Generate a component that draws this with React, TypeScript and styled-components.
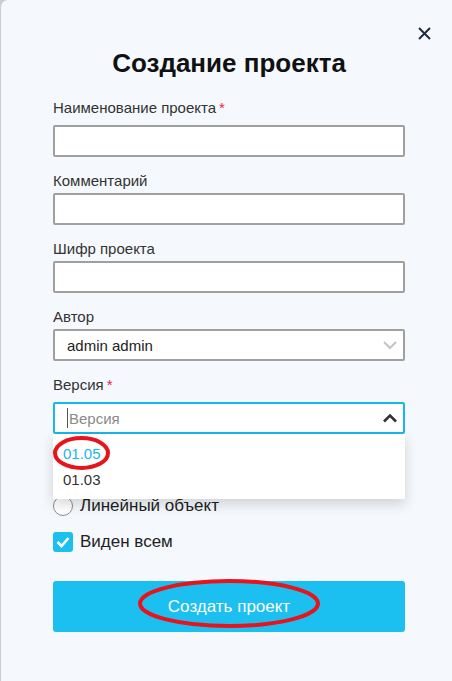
import React from 'react';
import styled, { createGlobalStyle } from 'styled-components';

const GlobalStyle = createGlobalStyle`
  html, body {
    margin: 0;
    padding: 0;
    background: #c8cdd3;
    font-family: "Liberation Sans", Arial, sans-serif;
  }
  * { box-sizing: border-box; }
`;

const Modal = styled.div`
  position: relative;
  margin-left: 1px;
  min-height: 681px;
  background: #f5f9fd;
  border-top-left-radius: 7px;
  padding: 48px 47px 40px 52px;
`;

const CloseButton = styled.button`
  position: absolute;
  top: 26px;
  right: 21px;
  width: 14px;
  height: 14px;
  padding: 0;
  border: none;
  background: transparent;
  display: flex;
  align-items: center;
  justify-content: center;
`;

const Title = styled.h1`
  margin: 0 0 21px;
  font-size: 26px;
  line-height: 30px;
  font-weight: 700;
  color: #111;
  text-align: center;
`;

const Form = styled.div`
  display: flex;
  flex-direction: column;
`;

const Field = styled.div<{ $mb?: number }>`
  display: flex;
  flex-direction: column;
  margin-bottom: ${(p) => (p.$mb ?? 15)}px;
  position: relative;
`;

const Label = styled.div<{ $required?: boolean }>`
  font-size: 15px;
  line-height: 18px;
  color: #333;
  margin-bottom: ${(p) => (p.$required ? 8 : 3)}px;
`;

const Star = styled.span`
  color: #e8204a;
  margin-left: 3px;
`;

const Input = styled.input`
  height: 32px;
  width: 100%;
  border: 2px solid #a0a0a0;
  border-radius: 2px;
  background: #fff;
  font: inherit;
  font-size: 15px;
  padding: 0 12px;
  outline: none;
`;

const SelectBox = styled.div<{ $focused?: boolean }>`
  height: 32px;
  border: 2px solid ${(p) => (p.$focused ? '#1ab7ea' : '#a0a0a0')};
  border-radius: 2px;
  background: #fff;
  display: flex;
  align-items: center;
  padding: 0 5px 0 12px;
  font-size: 15px;
  color: #222;
`;

const SelectValue = styled.span`
  flex: 1;
`;

const Placeholder = styled.span`
  flex: 1;
  color: #8a8a8a;
  display: flex;
  align-items: center;
`;

const Caret = styled.span`
  display: inline-block;
  width: 1px;
  height: 20px;
  background: #555;
  margin-right: 1px;
`;

const Dropdown = styled.div`
  position: absolute;
  top: 100%;
  left: 0;
  right: 0;
  background: #fff;
  box-shadow: 0 5px 12px rgba(0, 0, 0, 0.16);
  padding: 7px 0 6px;
  z-index: 2;
`;

const Option = styled.div<{ $active?: boolean }>`
  position: relative;
  padding: 0 10px;
  line-height: 26px;
  font-size: 15px;
  color: ${(p) => (p.$active ? '#1ab7ea' : '#333')};
`;

const Mark = styled.svg`
  position: absolute;
  pointer-events: none;
  overflow: visible;
`;

const ChoiceGroup = styled.div<{ $mt: number }>`
  display: flex;
  flex-direction: column;
  margin-top: ${(p) => p.$mt}px;
`;

const ChoiceRow = styled.label`
  display: flex;
  align-items: center;
  gap: 7px;
  height: 26px;
  font-size: 17px;
  color: #222;
`;

const RadioCircle = styled.span`
  width: 20px;
  height: 20px;
  border-radius: 50%;
  border: 1px solid #8c8c8c;
  background: #fff;
  flex: none;
`;

const CheckBox = styled.span`
  width: 20px;
  height: 20px;
  border-radius: 3px;
  background: #1bbff0;
  flex: none;
  display: flex;
  align-items: center;
  justify-content: center;
`;

const SubmitButton = styled.button`
  position: relative;
  margin-top: 26px;
  height: 51px;
  width: 100%;
  border: none;
  border-radius: 3px;
  background: #1bbff0;
  color: #fff;
  font: inherit;
  font-size: 17px;
`;

const ChevronDown = ({ color }: { color: string }) => (
  <svg width="16" height="10" viewBox="0 0 16 10">
    <path d="M2 2 L8 8 L14 2" fill="none" stroke={color} strokeWidth="2" />
  </svg>
);

const ChevronUp = ({ color }: { color: string }) => (
  <svg width="16" height="10" viewBox="0 0 16 10">
    <path d="M2 8.5 L8 2.5 L14 8.5" fill="none" stroke={color} strokeWidth="2.6" />
  </svg>
);

export default function App() {
  return (
    <>
      <GlobalStyle />
      <Modal>
        <CloseButton aria-label="Закрыть">
          <svg width="13" height="13" viewBox="0 0 13 13">
            <path d="M1 1 L12 12 M12 1 L1 12" stroke="#1e2d3d" strokeWidth="2" />
          </svg>
        </CloseButton>
        <Title>Создание проекта</Title>
        <Form>
          <Field>
            <Label $required>
              Наименование проекта<Star>*</Star>
            </Label>
            <Input />
          </Field>
          <Field>
            <Label>Комментарий</Label>
            <Input />
          </Field>
          <Field>
            <Label>Шифр проекта</Label>
            <Input />
          </Field>
          <Field>
            <Label>Автор</Label>
            <SelectBox>
              <SelectValue>admin admin</SelectValue>
              <ChevronDown color="#c4c4c4" />
            </SelectBox>
          </Field>
          <Field $mb={0}>
            <Label $required>
              Версия<Star>*</Star>
            </Label>
            <SelectBox $focused>
              <Placeholder>
                <Caret />
                Версия
              </Placeholder>
              <ChevronUp color="#333" />
            </SelectBox>
            <Dropdown>
              <Option $active>
                01.05
                <Mark width="60" height="38" style={{ left: -1, top: -6 }}>
                  <ellipse cx="29.5" cy="18" rx="26.5" ry="15" fill="none" stroke="#e8141c" strokeWidth="4" />
                </Mark>
              </Option>
              <Option>01.03</Option>
            </Dropdown>
          </Field>
          <ChoiceGroup $mt={59}>
            <ChoiceRow>
              <RadioCircle />
              Линейный объект
            </ChoiceRow>
          </ChoiceGroup>
          <ChoiceGroup $mt={10}>
            <ChoiceRow>
              <CheckBox>
                <svg width="14" height="12" viewBox="0 0 14 12">
                  <path d="M1.5 6 L5.5 10 L12.5 2" fill="none" stroke="#fff" strokeWidth="2.6" />
                </svg>
              </CheckBox>
              Виден всем
            </ChoiceRow>
          </ChoiceGroup>
          <SubmitButton>
            Создать проект
            <Mark width="186" height="52" style={{ left: 83, top: -2 }}>
              <ellipse cx="93" cy="24.5" rx="89" ry="22.5" fill="none" stroke="#e8141c" strokeWidth="4" />
            </Mark>
          </SubmitButton>
        </Form>
      </Modal>
    </>
  );
}
